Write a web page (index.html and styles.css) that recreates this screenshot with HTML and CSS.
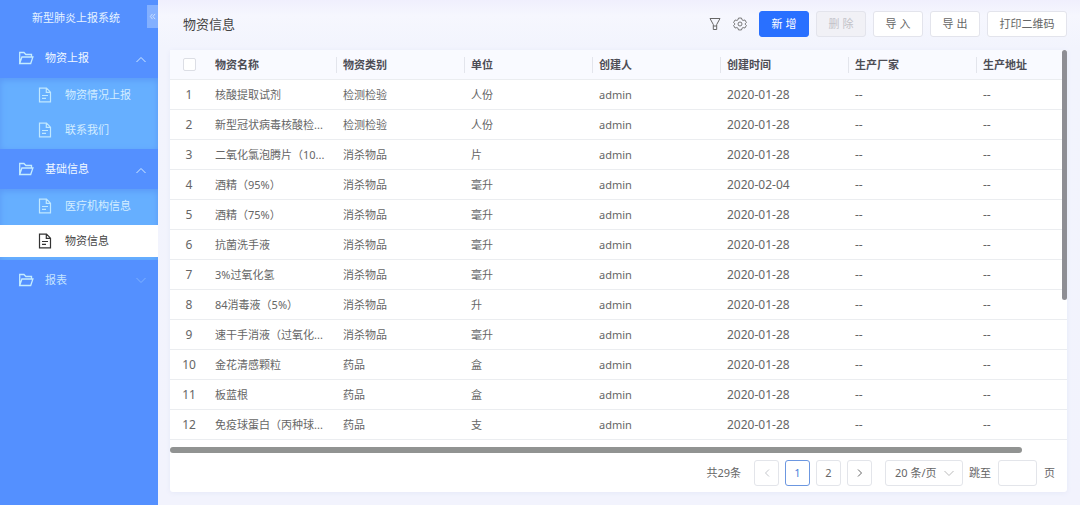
FILE: index.html
```html
<!DOCTYPE html>
<html lang="zh-CN">
<head>
  <meta charset="UTF-8">
  <meta name="viewport" content="width=device-width, initial-scale=1.0">
  <title>新型肺炎上报系统</title>
  <link rel="stylesheet" href="styles.css">
</head>
<body>
  <!-- Shared icons -->
  <svg class="sprite" aria-hidden="true">
    <symbol id="folder" viewBox="0 0 16 14">
      <path d="M1.7 12.500V1.500h4.300l1.800 2h5.700v2.500M1.700 12.500l2.200-6.500h11l-2.200 6.500z"/>
    </symbol>
    <symbol id="file" viewBox="0 0 14 16">
      <path d="M1.500 1.200h7l4 4v9.600h-11zM8.300 1.400v4h4M4 8.500h6M4 11.400h4"/>
    </symbol>
    <symbol id="up" viewBox="0 0 12 8"><path d="M1.500 6l4.500-4.500L10.500 6"/></symbol>
    <symbol id="down" viewBox="0 0 12 8"><path d="M1.500 2L6 6.500 10.500 2"/></symbol>
    <symbol id="left" viewBox="0 0 8 12"><path d="M6 2.500L2.500 6 6 9.500"/></symbol>
    <symbol id="right" viewBox="0 0 8 12"><path d="M2 2.500L5.500 6 2 9.500"/></symbol>
  </svg>

  <div class="layout">
    <aside class="sidebar">
      <div class="brand">新型肺炎上报系统</div>
      <button class="collapse" aria-label="收起菜单">
        <svg viewBox="0 0 8 8"><path d="M4 1L1.500 4 4 7M7 1L4.500 4 7 7"/></svg>
      </button>

      <nav>
        <button class="menu-title">
          <svg class="folder"><use href="#folder"/></svg>
          <span>物资上报</span>
          <svg class="arrow"><use href="#up"/></svg>
        </button>
        <div class="submenu">
          <a href="#"><svg class="file"><use href="#file"/></svg>物资情况上报</a>
          <a href="#"><svg class="file"><use href="#file"/></svg>联系我们</a>
        </div>

        <button class="menu-title">
          <svg class="folder"><use href="#folder"/></svg>
          <span>基础信息</span>
          <svg class="arrow"><use href="#up"/></svg>
        </button>
        <div class="submenu">
          <a href="#"><svg class="file"><use href="#file"/></svg>医疗机构信息</a>
          <a href="#" class="active"><svg class="file"><use href="#file"/></svg>物资信息</a>
        </div>

        <button class="menu-title closed">
          <svg class="folder"><use href="#folder"/></svg>
          <span>报表</span>
          <svg class="arrow"><use href="#down"/></svg>
        </button>
      </nav>
    </aside>

    <main class="main">
      <header class="toolbar">
        <h1>物资信息</h1>
        <button class="icon-btn" aria-label="筛选">
          <svg viewBox="0 0 14 14"><path d="M2 1.500h10L8.700 7.500v5H5.300v-5zM5.300 9h3.400"/></svg>
        </button>
        <button class="icon-btn setting" aria-label="设置">
          <svg viewBox="0 0 16 16">
            <path d="M6.300 1.200h3.400l.6 2 1.300.7 2-.5 1.700 2.900-1.400 1.500v.4l1.400 1.500-1.700 2.900-2-.5-1.300.7-.6 2H6.300l-.6-2-1.300-.7-2 .5L.7 9.700l1.400-1.500v-.4L.7 6.300l1.700-2.900 2 .5 1.300-.7z"/>
            <circle cx="8" cy="8" r="2.300"/>
          </svg>
        </button>
        <button class="btn primary">新 增</button>
        <button class="btn" disabled>删 除</button>
        <button class="btn">导 入</button>
        <button class="btn">导 出</button>
        <button class="btn wide">打印二维码</button>
      </header>

      <section class="card">
        <div class="table-wrap">
          <table>
            <colgroup>
              <col class="col-index">
              <col><col><col><col><col><col><col>
            </colgroup>
            <thead>
              <tr>
                <th><input type="checkbox" aria-label="全选"></th>
                <th>物资名称</th>
                <th>物资类别</th>
                <th>单位</th>
                <th>创建人</th>
                <th>创建时间</th>
                <th>生产厂家</th>
                <th>生产地址</th>
              </tr>
            </thead>
            <tbody>
              <tr><td>1</td><td>核酸提取试剂</td><td>检测检验</td><td>人份</td><td>admin</td><td>2020-01-28</td><td>--</td><td>--</td></tr>
              <tr><td>2</td><td>新型冠状病毒核酸检...</td><td>检测检验</td><td>人份</td><td>admin</td><td>2020-01-28</td><td>--</td><td>--</td></tr>
              <tr><td>3</td><td>二氧化氯泡腾片（10...</td><td>消杀物品</td><td>片</td><td>admin</td><td>2020-01-28</td><td>--</td><td>--</td></tr>
              <tr><td>4</td><td>酒精（95%）</td><td>消杀物品</td><td>毫升</td><td>admin</td><td>2020-02-04</td><td>--</td><td>--</td></tr>
              <tr><td>5</td><td>酒精（75%）</td><td>消杀物品</td><td>毫升</td><td>admin</td><td>2020-01-28</td><td>--</td><td>--</td></tr>
              <tr><td>6</td><td>抗菌洗手液</td><td>消杀物品</td><td>毫升</td><td>admin</td><td>2020-01-28</td><td>--</td><td>--</td></tr>
              <tr><td>7</td><td>3%过氧化氢</td><td>消杀物品</td><td>毫升</td><td>admin</td><td>2020-01-28</td><td>--</td><td>--</td></tr>
              <tr><td>8</td><td>84消毒液（5%）</td><td>消杀物品</td><td>升</td><td>admin</td><td>2020-01-28</td><td>--</td><td>--</td></tr>
              <tr><td>9</td><td>速干手消液（过氧化...</td><td>消杀物品</td><td>毫升</td><td>admin</td><td>2020-01-28</td><td>--</td><td>--</td></tr>
              <tr><td>10</td><td>金花清感颗粒</td><td>药品</td><td>盒</td><td>admin</td><td>2020-01-28</td><td>--</td><td>--</td></tr>
              <tr><td>11</td><td>板蓝根</td><td>药品</td><td>盒</td><td>admin</td><td>2020-01-28</td><td>--</td><td>--</td></tr>
              <tr><td>12</td><td>免疫球蛋白（丙种球...</td><td>药品</td><td>支</td><td>admin</td><td>2020-01-28</td><td>--</td><td>--</td></tr>
            </tbody>
          </table>
          <div class="thumb-y"></div>
        </div>
        <div class="track-x"><div class="thumb-x"></div></div>

        <footer class="pagination">
          <span class="total">共29条</span>
          <button class="page" disabled aria-label="上一页"><svg><use href="#left"/></svg></button>
          <button class="page current">1</button>
          <button class="page">2</button>
          <button class="page" aria-label="下一页"><svg><use href="#right"/></svg></button>
          <div class="size">
            <select aria-label="每页条数">
              <option>20 条/页</option>
              <option>50 条/页</option>
            </select>
            <svg><use href="#down"/></svg>
          </div>
          <label class="jump">跳至 <input type="text"> 页</label>
        </footer>
      </section>
    </main>
  </div>
</body>
</html>
```
FILE: styles.css
```css
* {
  box-sizing: border-box;
}
body {
  margin: 0;
  font-family: "Noto Sans", "Noto Sans CJK SC", sans-serif;
  font-size: 11px;
  line-height: 16px;
  color: #666;
  background: #f3f4fd;
}
button, input, select {
  margin: 0;
  padding: 0;
  border: 0;
  background: none;
  font: inherit;
  color: inherit;
}
svg {
  display: block;
  flex: none;
  fill: none;
  stroke: currentColor;
}
.sprite {
  position: absolute;
  width: 0;
  height: 0;
}
.layout {
  display: flex;
  min-height: 100vh;
}

/* Sidebar */
.sidebar {
  position: relative;
  flex: none;
  width: 158px;
  background: #5490ff;
  color: #e6f3ff;
}
.brand {
  height: 38px;
  padding-left: 32px;
  line-height: 36px;
}
.collapse {
  position: absolute;
  top: 5px;
  right: 0;
  width: 11px;
  height: 23px;
  background: #83b0ff;
  color: #d5e6ff;
}
.collapse svg {
  width: 7px;
  height: 7px;
  margin: 0 auto;
}
.menu-title {
  display: flex;
  align-items: center;
  width: 100%;
  height: 40px;
  padding: 0 11px 0 18px;
  color: #f0f8ff;
  text-align: left;
}
.menu-title span {
  flex: 1;
  margin-left: 11px;
}
.folder {
  width: 16px;
  height: 14px;
  color: #c4ecff;
  stroke-width: 1.3;
}
.arrow {
  width: 12px;
  height: 8px;
  margin-top: 4px;
  color: #d2eaff;
}
.closed .arrow {
  margin-top: 0;
  color: #7fb2ff;
}
.closed span {
  color: #c4e4ff;
}
.submenu {
  display: flex;
  flex-direction: column;
  gap: 3px;
  padding: 1px 0 3px;
  background: #66afff;
  box-shadow: inset 0 2px 6px #5a98f6;
}
.submenu a {
  display: flex;
  align-items: center;
  height: 32px;
  padding-left: 38px;
  color: #d3edff;
  text-decoration: none;
}
.file {
  width: 14px;
  height: 16px;
  margin-right: 13px;
  color: #c0e8ff;
  stroke-width: 1.2;
}
.submenu .active {
  background: #fff;
  color: #444;
}
.active .file {
  color: #333;
}

/* Toolbar */
.main {
  flex: 1;
  min-width: 0;
  padding: 0 13px 13px 12px;
  background: linear-gradient(to bottom, #f0effd, #f6f7fe 16px, #f2f4fd 48px, #f2f3fd);
}
.toolbar {
  display: flex;
  align-items: center;
  gap: 7px;
  height: 50px;
  padding-bottom: 2px;
}
.toolbar h1 {
  flex: 1;
  margin: 0 0 0 13px;
  font-size: 13px;
  font-weight: normal;
  color: #444;
}
.icon-btn {
  width: 14px;
  margin-right: 4px;
  color: #666;
}
.icon-btn svg {
  width: 14px;
  height: 14px;
}
.setting {
  margin-right: 5px;
}
.btn {
  width: 50px;
  height: 26px;
  border: 1px solid #e3e4ec;
  border-radius: 3px;
  background: #fff;
}
.btn.primary {
  border-color: #2970ff;
  background: #2970ff;
  color: #fff;
}
.btn:disabled {
  background: #f1f1f6;
  color: #c2c2c8;
}
.btn.wide {
  width: 80px;
}

/* Table */
.card {
  background: #fff;
  border-radius: 3px;
  box-shadow: 0 1px 5px #e6e9f8;
}
.table-wrap {
  position: relative;
  overflow: hidden;
}
table {
  width: 934px;
  min-width: 100%;
  table-layout: fixed;
  border-collapse: separate;
  border-spacing: 0;
}
.col-index {
  width: 38px;
}
th, td {
  height: 30px;
  padding: 0 7px;
  border-bottom: 1px solid #ebedf0;
  overflow: hidden;
  text-align: left;
  text-overflow: ellipsis;
  white-space: nowrap;
}
th {
  background: #f9faff linear-gradient(#e3e5ec, #e3e5ec) no-repeat 0 7px / 1px 16px;
  color: #4d4d55;
}
th:nth-child(-n+2) {
  background: #f9faff;
}
th:first-child, td:first-child {
  padding: 0;
  text-align: center;
}
td:first-child, td:nth-child(n+6) {
  font-size: 12px;
}
th input {
  display: block;
  width: 13px;
  height: 13px;
  margin: 0 auto;
  appearance: none;
  border: 1px solid #dcdee5;
  border-radius: 2px;
  background: #fff;
}
.thumb-y {
  position: absolute;
  top: 0;
  right: 0;
  width: 5px;
  height: 64%;
  border-radius: 3px;
  background: #8e8e94;
}
.track-x {
  padding-top: 7px;
}
.thumb-x {
  width: 95%;
  height: 6px;
  border-radius: 3px;
  background: #919392;
}

/* Pagination */
.pagination {
  display: flex;
  align-items: center;
  justify-content: flex-end;
  gap: 6px;
  padding: 7px 12px 6px;
}
.total {
  margin-right: 7px;
}
.page {
  display: flex;
  align-items: center;
  justify-content: center;
  width: 25px;
  height: 26px;
  border: 1px solid #e3e5ea;
  border-radius: 3px;
}
.page svg {
  width: 8px;
  height: 12px;
}
.page:disabled {
  color: #c5c7cc;
}
.page.current {
  border-color: #6c97e0;
  color: #4a7fdc;
}
.size {
  position: relative;
  margin-left: 7px;
}
.size select {
  display: block;
  width: 78px;
  height: 26px;
  padding-left: 9px;
  appearance: none;
  border: 1px solid #e3e5ea;
  border-radius: 3px;
}
.size svg {
  position: absolute;
  top: 9px;
  right: 8px;
  width: 12px;
  height: 8px;
  color: #bbb;
}
.jump {
  display: flex;
  align-items: center;
  gap: 7px;
}
.jump input {
  width: 39px;
  height: 26px;
  border: 1px solid #e3e5ea;
  border-radius: 3px;
}
```
